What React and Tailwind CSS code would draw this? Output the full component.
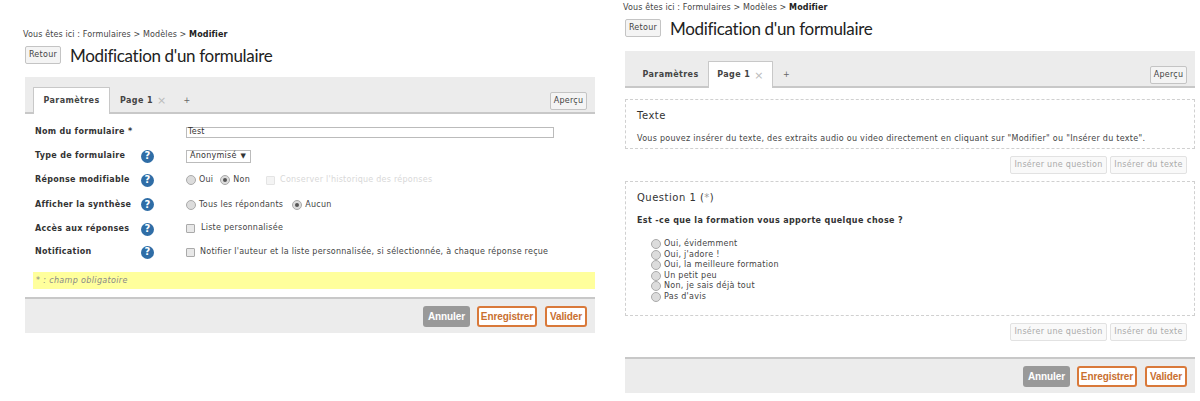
const sans = "font-['DejaVu_Sans','Liberation_Sans',sans-serif]";

function SmallBtn({ children, className = "" }) {
  return (
    <span className={"flex items-center justify-center rounded-[2px] border border-[#c4c4c4] bg-[#f4f4f4] text-[8px] leading-none tracking-[0.28px] text-[#444] " + className}>
      {children}
    </span>
  );
}

function Help() {
  return (
    <span className="flex h-[13px] w-[13px] items-center justify-center rounded-full bg-[#2f6da6] text-[10px] font-bold leading-none text-white">?</span>
  );
}

function Radio({ checked, className = "" }) {
  return (
    <span className={"flex h-[10px] w-[10px] shrink-0 items-center justify-center rounded-full border border-[#aaa] bg-[#dcdcdc] " + className}>
      {checked && <span className="h-[4px] w-[4px] rounded-full bg-[#555]" />}
    </span>
  );
}

function Check({ disabled, className = "" }) {
  return <span className={"block h-[9px] w-[9px] shrink-0 rounded-[1px] border " + (disabled ? "border-[#e4e4e4] bg-[#f4f4f4] " : "border-[#aaa] bg-[#e8e8e8] ") + className} />;
}

function Header({ top }) {
  return (
    <>
      <div className={"flex items-center whitespace-nowrap text-[8px] leading-none tracking-[0.12px] text-[#444] " + top}>
        <span>Vous êtes ici : Formulaires &gt; Modèles &gt;&nbsp;</span>
        <b className="text-[#222]">Modifier</b>
      </div>
      <div className="flex items-center">
        <SmallBtn className="h-[18px] w-[36px]">Retour</SmallBtn>
        <h1 className="ml-[9px] font-['Lato',sans-serif] text-[17px] font-normal leading-none tracking-[-0.33px] text-[#222]">Modification d'un formulaire</h1>
      </div>
    </>
  );
}

function Tabs({ active }) {
  const on = "flex h-[27px] mb-[-2px] items-center justify-center self-end rounded-t-[1px] border-x border-t border-[#c8c8c8] bg-white";
  const off = "flex h-[27px] mb-[-2px] items-center justify-center self-end";
  const first = active === 0;
  return (
    <div className="flex h-[37px] items-stretch whitespace-nowrap border-b-2 border-[#c8c8c8] bg-[#ececec] px-[8px] text-[8px] font-bold tracking-[0.4px] text-[#444]">
      {first
        ? <span className={on + " w-[77px]"}>Paramètres</span>
        : <span className={off + " w-[75px]"}>Paramètres</span>}
      {first
        ? <span className={off + " ml-[10px] gap-[4px]"}>Page 1 <span className="text-[11px] font-normal leading-none text-[#bbb]">×</span></span>
        : <span className={on + " w-[65px] gap-[4px]"}>Page 1 <span className="text-[11px] font-normal leading-none text-[#bbb]">×</span></span>}
      <span className={off + " font-normal text-[#666] " + (first ? "ml-[17px]" : "ml-[10px]")}>+</span>
      <SmallBtn className="ml-auto mt-[15px] h-[18px] w-[37px] font-normal">Aperçu</SmallBtn>
    </div>
  );
}

function Footer() {
  return (
    <div className="flex h-[36px] items-center justify-end gap-[7px] whitespace-nowrap border-t-2 border-[#c8c8c8] bg-[#ececec] pr-[8px] font-['Liberation_Sans',sans-serif] text-[10px] font-bold tracking-[-0.1px]">
      <span className="flex h-[21px] w-[47px] items-center justify-center rounded-[3px] bg-[#999] text-white">Annuler</span>
      <span className="flex h-[21px] w-[60px] items-center justify-center rounded-[3px] border-2 border-[#d9793a] bg-white text-[#c96f30]">Enregistrer</span>
      <span className="ml-[1px] flex h-[21px] w-[42px] items-center justify-center rounded-[3px] border-2 border-[#d9793a] bg-white text-[#c96f30]">Valider</span>
    </div>
  );
}

function Row({ label, help = true, h, children }) {
  return (
    <div className={"flex items-center whitespace-nowrap " + h}>
      <span className="w-[106px] text-[8px] font-bold tracking-[0.3px] text-[#333]">{label}</span>
      <span className="flex w-[45px] items-center">{help && <Help />}</span>
      <div className="flex items-center text-[8px] tracking-[0.25px] text-[#444]">{children}</div>
    </div>
  );
}

function InsertBar() {
  return (
    <div className="flex h-[32px] items-center justify-end gap-[3px] pr-[8px]">
      <SmallBtn className="h-[18px] w-[97px] !border-[#e2e2e2] !bg-[#f9f9f9] !text-[#aaa]">Insérer une question</SmallBtn>
      <SmallBtn className="h-[18px] w-[77px] !border-[#e2e2e2] !bg-[#f9f9f9] !text-[#aaa]">Insérer du texte</SmallBtn>
    </div>
  );
}

const answers = ["Oui, évidemment", "Oui, j'adore !", "Oui, la meilleure formation", "Un petit peu", "Non, je sais déjà tout", "Pas d'avis"];

export default function App() {
  return (
    <div className={"flex h-[401px] w-[1200px] overflow-hidden bg-white pl-[25px] " + sans}>
      <div className="w-[570px]">
        <Header top="mb-[7px] mt-[30px] h-[9px] -ml-[2px]" />
        <div className="mt-[13px]">
          <Tabs active={0} />
          <div className="pl-[10px] pt-[6px]">
            <Row label="Nom du formulaire *" help={false} h="h-[24px]">
              <span className="flex h-[11px] w-[368px] items-center border border-[#bbb] pl-[1px] leading-none text-[#333]">Test</span>
            </Row>
            <Row label="Type de formulaire" h="h-[24px]">
              <span className="flex h-[13px] w-[65px] items-center gap-[4px] border border-[#bbb] pl-[3px] leading-none text-[#333]">Anonymisé <span className="text-[7px]">▼</span></span>
            </Row>
            <Row label="Réponse modifiable" h="h-[24px]">
              <Radio /><span className="ml-[3px]">Oui</span>
              <Radio checked className="ml-[7px]" /><span className="ml-[3px]">Non</span>
              <Check disabled className="ml-[16px]" />
              <span className="ml-[5px] text-[#d8d8d8]">Conserver l'historique des réponses</span>
            </Row>
            <Row label="Afficher la synthèse" h="h-[25px]">
              <Radio /><span className="ml-[3px]">Tous les répondants</span>
              <Radio checked className="ml-[9px]" /><span className="ml-[3px]">Aucun</span>
            </Row>
            <Row label="Accès aux réponses" h="h-[24px]">
              <Check className="mt-[-2px]" /><span className="ml-[6px] mt-[-2px]">Liste personnalisée</span>
            </Row>
            <Row label="Notification" h="h-[22px]">
              <Check /><span className="ml-[5px]">Notifier l'auteur et la liste personnalisée, si sélectionnée, à chaque réponse reçue</span>
            </Row>
          </div>
          <div className="ml-[8px] mt-[9px] flex h-[17px] items-center bg-[#ffff9c] pl-[3px] text-[8px] italic tracking-[0.35px] text-[#888]">* : champ obligatoire</div>
          <div className="mt-[8px]"><Footer /></div>
        </div>
      </div>
      <div className="ml-[30px] w-[570px]">
        <Header top="mb-[7px] mt-[3px] h-[9px] -ml-[2px]" />
        <div className="mt-[14px]">
          <Tabs active={1} />
          <div className="mt-[11px] h-[50px] border border-dashed border-[#d0d0d0] px-[11px] pt-[11px]">
            <div className="text-[10px] font-medium leading-none tracking-[0.5px] text-[#333]">Texte</div>
            <p className="mt-[14px] whitespace-nowrap text-[8px] leading-none tracking-[0.28px] text-[#444]">Vous pouvez insérer du texte, des extraits audio ou video directement en cliquant sur "Modifier" ou "Insérer du texte".</p>
          </div>
          <InsertBar />
          <div className="h-[135px] border border-dashed border-[#d0d0d0] px-[11px] pt-[11px]">
            <div className="text-[10px] leading-none tracking-[0.5px] text-[#333]">Question 1 (<span className="text-[#999]">*</span>)</div>
            <p className="mt-[14px] whitespace-nowrap text-[8px] font-bold leading-none tracking-[0.38px] text-[#333]">Est -ce que la formation vous apporte quelque chose ?</p>
            <ul className="ml-[14px] mt-[14px] text-[8px] tracking-[0.28px] text-[#444]">
              {answers.map((a) => (
                <li key={a} className="flex h-[10.5px] items-center gap-[3px] leading-none"><Radio />{a}</li>
              ))}
            </ul>
          </div>
          <InsertBar />
          <div className="mt-[9px]"><Footer /></div>
        </div>
      </div>
    </div>
  );
}
